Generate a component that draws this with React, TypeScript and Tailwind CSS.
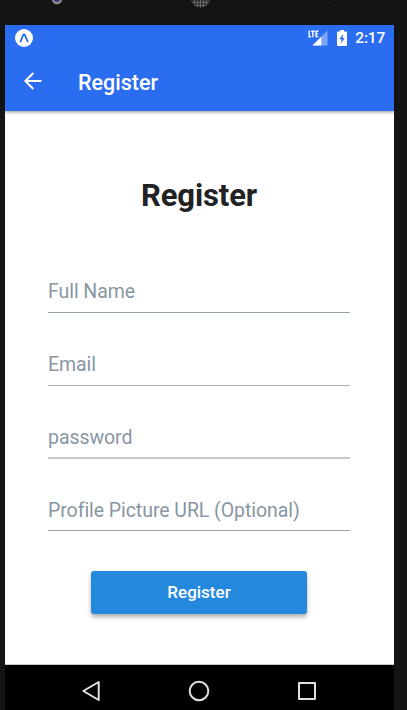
import React from "react";

const fields = [
  { label: "Full Name", height: "h-[42px]", line: "h-px bg-[#96a4b2]" },
  { label: "Email", height: "h-[42px]", line: "h-px bg-[#a4adb9]" },
  { label: "password", height: "h-[42px]", line: "h-0.5 -mt-px bg-[#c2c8cd]" },
  { label: "Profile Picture URL (Optional)", height: "h-[41px]", line: "h-px bg-[#95a4af]" },
];

function Bezel() {
  return (
    <svg className="block h-[25px] w-full shrink-0" viewBox="0 0 407 25">
      <defs>
        <pattern id="mesh" width="3" height="3" patternUnits="userSpaceOnUse">
          <rect width="3" height="3" fill="#666" />
          <rect width="2" height="2" fill="#2b2b2b" />
        </pattern>
      </defs>
      <circle cx="57" cy="-1" r="5.2" fill="#8b8b8d" />
      <circle cx="57" cy="-1.5" r="3.4" fill="#43347f" />
      <circle cx="200.500" cy="-2" r="9.500" fill="url(#mesh)" />
      <circle cx="335" cy="-3" r="4" fill="#222" />
    </svg>
  );
}

function StatusBar() {
  return (
    <div className="flex h-[26px] items-center pr-[9px] pl-[10px] text-white">
      <svg width="18" height="18" viewBox="0 0 18 18">
        <circle cx="9" cy="9" r="9" fill="#fff" />
        <path d="M5.600 12.500 8.200 5.900Q9 4.800 9.800 5.900L12.600 12.500" fill="none" stroke="#2b6df0" strokeWidth="1.900" strokeLinecap="round" />
      </svg>
      <div className="ml-auto flex items-center">
        <svg width="20" height="16" viewBox="0 0 20 16">
          <path d="M19.500 0.500V15.500H4.500Z" fill="#7da6f6" />
          <path d="M13.300 6.700V15.500H4.500Z" fill="#fff" />
          <path d="M1.200 0.500V6.700H3.200M3.200 1.200H6.600M4.900 1.200V7.200M10.300 1.200H8.100V6.600H10.300M8.100 3.900H10" fill="none" stroke="#fff" strokeWidth="1.400" />
        </svg>
        <svg className="ml-[9px]" width="10" height="16" viewBox="0 0 10 16">
          <path d="M3 0H7V1.500H9Q10 1.500 10 2.500V15Q10 16 9 16H1Q0 16 0 15V2.500Q0 1.500 1 1.500H3Z" fill="#fff" />
          <path d="M6.200 4 2.300 9.200H4.600L3.900 13.500 7.800 8H5.500Z" fill="#2b6df0" />
        </svg>
        <span className="ml-2 pt-[2px] text-[15.500px] leading-none font-medium tracking-[-0.2px]">2:17</span>
      </div>
    </div>
  );
}

export default function App() {
  return (
    <div className="flex h-[710px] w-[407px] flex-col overflow-hidden bg-[#141414] font-['Roboto',sans-serif]">
      <Bezel />
      <div className="ml-[5px] flex w-[389px] grow flex-col bg-white">
        <header className="h-[86px] bg-[#2b6df0] text-white shadow-[0_1px_3px_rgba(0,0,0,0.45)]">
          <StatusBar />
          <div className="flex h-[60px] items-center pl-[19px]">
            <svg width="18" height="18" viewBox="0 0 18 18" fill="none" stroke="#fff" strokeWidth="2">
              <path d="M17.500 9H1.500M9.300 1 1.300 9l8 8" />
            </svg>
            <span className="ml-[36px] pt-[3px] text-[21.500px] leading-none font-medium">Register</span>
          </div>
        </header>
        <main className="flex h-[554px] flex-col items-center border-b border-[#c4c8c8]">
          <h1 className="mt-[65px] mr-px h-10 text-[31px] leading-10 font-bold tracking-[-0.1px] text-[#222223]">Register</h1>
          <div className="mt-[54px] mr-px flex w-[302px] flex-col gap-[30px]">
            {fields.map((f) => (
              <div key={f.label} className="flex flex-col">
                <label className={"pt-px text-[19.500px] leading-[41px] tracking-[-0.06px] text-[#8896a3] " + f.height}>{f.label}</label>
                <div className={f.line} />
              </div>
            ))}
          </div>
          <button className="mt-[40px] mr-px h-[43px] w-[216px] rounded-[3px] bg-[#2489dd] text-[17px] font-medium text-white shadow-[0_3px_4px_rgba(0,0,0,0.32)]">
            Register
          </button>
        </main>
        <nav className="flex grow items-center bg-black pt-[6px] pl-[76px]">
          <svg width="238" height="22" viewBox="0 0 238 22" fill="none" stroke="#e2e2e2" strokeWidth="2" strokeLinejoin="round">
            <path d="M17.700 2V20L2.300 11Z" />
            <circle cx="118" cy="11" r="9.300" />
            <rect x="218" y="3" width="16" height="16" />
          </svg>
        </nav>
      </div>
    </div>
  );
}
